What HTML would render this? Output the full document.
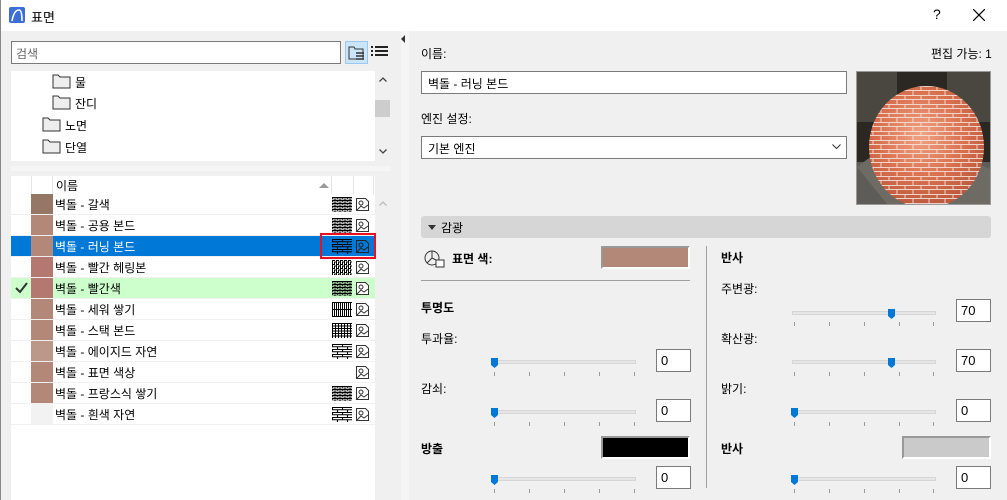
<!DOCTYPE html>
<html><head><meta charset="utf-8"><style>
*{box-sizing:border-box;margin:0;padding:0}
body{width:1007px;height:500px;overflow:hidden;background:#f0f0f0;font-family:"Liberation Sans","Noto Sans CJK KR",sans-serif;font-size:12px;color:#000;position:relative}
.a{position:absolute}
.inp{position:absolute;background:#fff;border:1px solid #7a7a7a}
.row{position:absolute;left:11px;width:364px;height:21px;border-bottom:1px solid #f0f0f0}
.row .sw{position:absolute;left:20px;top:0;width:22px;height:20px}
.row .nm{position:absolute;left:44px;top:2px}
.row .pt{position:absolute;left:321px;top:3px;width:20px;height:15px}
.row .ic{position:absolute;left:344px;top:3px;width:15px;height:15px}
.sl{position:absolute;height:4px;background:#e6e6e6;border:1px solid #d6d6d6}
.th{position:absolute;width:7px;height:10px;background:#0078d7;clip-path:polygon(0 0,100% 0,100% 70%,50% 100%,0 70%)}
.num{position:absolute;width:35px;height:23px;background:#fff;border:1px solid #7a7a7a;padding:3px 4px;font-size:13px}
.lbl{position:absolute;font-size:12px}
.b{font-weight:bold}
</style></head><body>
<svg width="0" height="0" style="position:absolute"><defs>
<symbol id="img" viewBox="0 0 15 15"><path d="M1.5 1.5h9l3 3v9h-12z" fill="#fff" stroke="#333"/><circle cx="6" cy="6" r="2" fill="none" stroke="#333"/><path d="M2 13l4-4 3 2 4-3" fill="none" stroke="#333"/></symbol>
<pattern id="p1" width="5" height="3" patternUnits="userSpaceOnUse"><path d="M0 0.5h5M0.5 0v1.5M3 1.5v1.5" stroke="#000"/><path d="M0 2h5" stroke="#000" stroke-width=".6"/></pattern>
<pattern id="p2" width="10" height="5" patternUnits="userSpaceOnUse"><path d="M0 0.5h10M0.5 0.5v2.5M5.5 2.5v2.5M0 2.75h10" stroke="#000" stroke-width="1.1"/></pattern>
<pattern id="p3" width="4" height="4" patternUnits="userSpaceOnUse"><path d="M0 0.5h3M0.5 0v4M2 2h2M2.5 2v2" stroke="#000"/></pattern>
<pattern id="p4" width="2" height="7" patternUnits="userSpaceOnUse"><path d="M0.5 0v7M0 0.5h2" stroke="#000"/></pattern>
<pattern id="p5" width="3" height="2.5" patternUnits="userSpaceOnUse"><path d="M0 0.5h3M0.5 0v3" stroke="#000"/></pattern>
</defs></svg>
<!-- title bar -->
<div class="a" style="left:0;top:0;width:1007px;height:31px;background:#fff"></div>
<div class="a" style="left:9px;top:7px;width:16px;height:16px;background:#3b6fd6;border-radius:2px"></div>
<svg class="a" style="left:9px;top:7px" width="16" height="16"><path d="M3 14 Q5 3 10 3 Q13 3 13 14" stroke="#fff" stroke-width="1.6" fill="none"/></svg>
<div class="a" style="left:31px;top:7px;font-size:13px">표면</div>
<div class="a" style="left:933px;top:6px;font-size:14px">?</div>
<svg class="a" style="left:973px;top:9px" width="12" height="12"><path d="M0 0L12 12M12 0L0 12" stroke="#000" stroke-width="1.2"/></svg>

<!-- left panel -->
<div class="inp" style="left:11px;top:41px;width:330px;height:23px;padding:3px 4px;color:#666">검색</div>
<div class="a" style="left:345px;top:41px;width:23px;height:23px;background:#cce4f7;border:1px solid #99c9ef"></div>
<svg class="a" style="left:348px;top:45px" width="18" height="16"><path d="M1 2h5l1 2h8v10H1z" fill="none" stroke="#333"/><path d="M8 8h8M8 11h8M8 14h8" stroke="#333" stroke-width="1.5"/></svg>
<svg class="a" style="left:371px;top:46px" width="17" height="12"><path d="M0 1h2M4 1h13M0 5h2M4 5h13M0 9h2M4 9h13" stroke="#222" stroke-width="2"/></svg>

<div class="a" style="left:11px;top:71px;width:364px;height:90px;background:#fff"></div>
<div class="a" style="left:375px;top:71px;width:16px;height:90px;background:#f0f0f0"></div>
<div class="a" style="left:375px;top:100px;width:15px;height:17px;background:#cdcdcd"></div>
<svg class="a" style="left:379px;top:77px" width="8" height="5"><path d="M0.5 4.5L4 1L7.5 4.5" stroke="#444" fill="none" stroke-width="1.3"/></svg>
<svg class="a" style="left:379px;top:149px" width="8" height="5"><path d="M0.5 0.5L4 4L7.5 0.5" stroke="#444" fill="none" stroke-width="1.3"/></svg>
<svg class="a" style="left:52px;top:73px" width="20" height="17"><path d="M1 2h5l2 2h10v11H1z" fill="#eee" stroke="#333"/></svg>
<div class="a" style="left:75px;top:74px">물</div>
<svg class="a" style="left:52px;top:94px" width="20" height="17"><path d="M1 2h5l2 2h10v11H1z" fill="#eee" stroke="#333"/></svg>
<div class="a" style="left:75px;top:95px">잔디</div>
<svg class="a" style="left:42px;top:116px" width="20" height="17"><path d="M1 2h5l2 2h10v11H1z" fill="#eee" stroke="#333"/></svg>
<div class="a" style="left:65px;top:117px">노면</div>
<svg class="a" style="left:42px;top:138px" width="20" height="17"><path d="M1 2h5l2 2h10v11H1z" fill="#eee" stroke="#333"/></svg>
<div class="a" style="left:65px;top:139px">단열</div>

<div class="a" style="left:11px;top:166px;width:380px;height:5px;background:#f5f5f5"></div>

<div class="a" style="left:11px;top:176px;width:364px;height:324px;background:#fff"></div>
<div class="a" style="left:375px;top:176px;width:16px;height:324px;background:#f0f0f0"></div>
<svg class="a" style="left:379px;top:201px" width="8" height="5"><path d="M0.5 4.5L4 1L7.5 4.5" stroke="#bbb" fill="none" stroke-width="1.3"/></svg>
<div class="a" style="left:31px;top:176px;width:1px;height:18px;background:#e5e5e5"></div>
<div class="a" style="left:52px;top:176px;width:1px;height:18px;background:#e5e5e5"></div>
<div class="a" style="left:331px;top:176px;width:1px;height:18px;background:#e5e5e5"></div>
<div class="a" style="left:353px;top:176px;width:1px;height:18px;background:#e5e5e5"></div>
<div class="a" style="left:373px;top:176px;width:1px;height:18px;background:#e5e5e5"></div>
<div class="a" style="left:56px;top:177px">이름</div>
<div class="a" style="left:319px;top:183px;width:0;height:0;border-left:5px solid transparent;border-right:5px solid transparent;border-bottom:5px solid #999"></div>

<div class="row" style="top:194px"><div class="sw" style="background:#967766"></div><div class="nm">벽돌 - 갈색</div><svg class="pt"><rect width="20" height="15" fill="url(#p1)"/></svg><svg class="ic"><use href="#img"/></svg></div>
<div class="row" style="top:215px"><div class="sw" style="background:#b48878"></div><div class="nm">벽돌 - 공용 본드</div><svg class="pt"><rect width="20" height="15" fill="url(#p1)"/></svg><svg class="ic"><use href="#img"/></svg></div>
<div class="row" style="top:236px;background:#0078d7;color:#fff"><div class="sw" style="background:#b48878"></div><div class="nm">벽돌 - 러닝 본드</div><svg class="pt"><rect width="20" height="15" fill="url(#p2)"/></svg><svg class="ic"><path d="M1.5 1.5h9l3 3v9h-12z" fill="#0078d7" stroke="#222"/><circle cx="6" cy="6" r="2" fill="none" stroke="#222"/><path d="M2 13l4-4 3 2 4-3" fill="none" stroke="#222"/></svg></div>
<div class="a" style="left:320px;top:233px;width:56px;height:26px;border:2px solid #e81123"></div>
<div class="row" style="top:257px"><div class="sw" style="background:#b47870"></div><div class="nm">벽돌 - 빨간 헤링본</div><svg class="pt"><rect width="20" height="15" fill="url(#p3)"/></svg><svg class="ic"><use href="#img"/></svg></div>
<div class="row" style="top:278px;background:#ccffcc"><svg class="a" style="left:4px;top:4px" width="13" height="12"><path d="M1 6l4 4 7-9" stroke="#333" stroke-width="2" fill="none"/></svg><div class="sw" style="background:#b47870"></div><div class="nm">벽돌 - 빨간색</div><svg class="pt"><rect width="20" height="15" fill="url(#p1)"/></svg><svg class="ic"><use href="#img"/></svg></div>
<div class="row" style="top:299px"><div class="sw" style="background:#b48878"></div><div class="nm">벽돌 - 세워 쌓기</div><svg class="pt"><rect width="20" height="15" fill="url(#p4)"/></svg><svg class="ic"><use href="#img"/></svg></div>
<div class="row" style="top:320px"><div class="sw" style="background:#b48878"></div><div class="nm">벽돌 - 스택 본드</div><svg class="pt"><rect width="20" height="15" fill="url(#p5)"/></svg><svg class="ic"><use href="#img"/></svg></div>
<div class="row" style="top:341px"><div class="sw" style="background:#bc9888"></div><div class="nm">벽돌 - 에이지드 자연</div><svg class="pt"><rect width="20" height="15" fill="url(#p2)"/></svg><svg class="ic"><use href="#img"/></svg></div>
<div class="row" style="top:362px"><div class="sw" style="background:#b48878"></div><div class="nm">벽돌 - 표면 색상</div><svg class="ic"><use href="#img"/></svg></div>
<div class="row" style="top:383px"><div class="sw" style="background:#b48878"></div><div class="nm">벽돌 - 프랑스식 쌓기</div><svg class="pt"><rect width="20" height="15" fill="url(#p1)"/></svg><svg class="ic"><use href="#img"/></svg></div>
<div class="row" style="top:404px"><div class="sw" style="background:#f2f2f2"></div><div class="nm">벽돌 - 흰색 자연</div><svg class="pt"><rect width="20" height="15" fill="url(#p2)"/></svg><svg class="ic"><use href="#img"/></svg></div>

<!-- splitter -->
<div class="a" style="left:401px;top:31px;width:8px;height:469px;background:#f5f5f5"></div>
<div class="a" style="left:401px;top:35px;width:0;height:0;border-top:4px solid transparent;border-bottom:4px solid transparent;border-right:4px solid #333"></div>

<!-- right panel -->
<div class="lbl" style="left:421px;top:45px">이름:</div>
<div class="lbl" style="left:931px;top:45px">편집 가능: 1</div>
<div class="inp" style="left:421px;top:71px;width:426px;height:23px;padding:3px 6px">벽돌 - 러닝 본드</div>
<div class="lbl" style="left:421px;top:110px">엔진 설정:</div>
<div class="inp" style="left:421px;top:136px;width:426px;height:23px;padding:3px 6px">기본 엔진</div>
<svg class="a" style="left:832px;top:144px" width="9" height="6"><path d="M0.5 0.5L4.5 4.5L8.5 0.5" stroke="#333" fill="none"/></svg>
<div class="a" style="left:856px;top:71px;width:135px;height:134px;border:1px solid #999;background:#3f3b36;overflow:hidden">
<svg class="a" style="left:0;top:0" width="133" height="132"><rect width="133" height="132" fill="#2b2824"/><path d="M0 0h40v50H0zM90 0h43v50H90z" fill="#4a4640"/><path d="M0 90h133v42H0z" fill="#5e5c58"/><path d="M0 95l30 37h30L20 80zM80 132l30-45 23 10v35z" fill="#6e6a64"/></svg>
<div class="a" style="left:12px;top:14px;width:115px;height:122px;border-radius:50%;background:radial-gradient(circle at 45% 40%,#f0a384,#d9704e 45%,#b5553a 80%,#8a3d28);"></div>
<svg class="a" style="left:12px;top:14px" width="115" height="122"><defs><clipPath id="c"><ellipse cx="57.5" cy="61" rx="57.5" ry="61"/></clipPath><pattern id="bk" width="16" height="9" patternUnits="userSpaceOnUse"><path d="M0 0.5h16M0 4.5h16M4 0.5v4M12 4.5v4.5" stroke="#f5e8e0" stroke-width="1" opacity=".85"/></pattern></defs><rect width="115" height="122" fill="url(#bk)" clip-path="url(#c)"/></svg>
</div>

<div class="a" style="left:421px;top:216px;width:570px;height:22px;background:#d6d6d6;border-radius:3px"></div>
<div class="a" style="left:428px;top:225px;border-left:4px solid transparent;border-right:4px solid transparent;border-top:5px solid #333"></div>
<div class="lbl" style="left:441px;top:219px">감광</div>

<svg class="a" style="left:424px;top:250px" width="22" height="18"><circle cx="8" cy="8" r="7" fill="none" stroke="#333"/><path d="M8 1v7l-5 5M8 8l6 3" stroke="#333" fill="none"/><rect x="12" y="10" width="8" height="7" fill="#fff" stroke="#333"/></svg>
<div class="lbl b" style="left:452px;top:250px">표면 색:</div>
<div class="a" style="left:601px;top:246px;width:89px;height:23px;background:#b48878;border:2px solid #999;border-right-color:#fff;border-bottom-color:#fff"></div>
<div class="a" style="left:421px;top:280px;width:269px;height:1px;background:#a0a0a0"></div>
<div class="a" style="left:706px;top:246px;width:1px;height:242px;background:#a0a0a0"></div>

<div class="lbl b" style="left:421px;top:299px">투명도</div>
<div class="lbl" style="left:421px;top:330px">투과율:</div>
<div class="lbl" style="left:421px;top:380px">감쇠:</div>
<div class="lbl b" style="left:421px;top:440px">방출</div>
<div class="a" style="left:601px;top:436px;width:89px;height:23px;background:#000;border:2px solid #999;border-right-color:#fff;border-bottom-color:#fff"></div>

<div class="lbl b" style="left:721px;top:249px">반사</div>
<div class="lbl" style="left:721px;top:280px">주변광:</div>
<div class="lbl" style="left:721px;top:330px">확산광:</div>
<div class="lbl" style="left:721px;top:380px">밝기:</div>
<div class="lbl b" style="left:721px;top:440px">반사</div>
<div class="a" style="left:902px;top:436px;width:89px;height:23px;background:#cacaca;border:2px solid #999;border-right-color:#fff;border-bottom-color:#fff"></div>

<div class="sl" style="left:494px;top:360px;width:142px"></div><div class="th" style="left:491px;top:358px"></div>
<div class="sl" style="left:494px;top:410px;width:142px"></div><div class="th" style="left:491px;top:408px"></div>
<div class="sl" style="left:494px;top:477px;width:142px"></div><div class="th" style="left:491px;top:475px"></div>
<div class="num" style="left:656px;top:349px">0</div>
<div class="num" style="left:656px;top:399px">0</div>
<div class="num" style="left:656px;top:466px">0</div>
<div class="sl" style="left:792px;top:311px;width:144px"></div><div class="th" style="left:888px;top:309px"></div>
<div class="sl" style="left:792px;top:360px;width:144px"></div><div class="th" style="left:888px;top:358px"></div>
<div class="sl" style="left:792px;top:410px;width:144px"></div><div class="th" style="left:791px;top:408px"></div>
<div class="sl" style="left:792px;top:477px;width:144px"></div><div class="th" style="left:791px;top:475px"></div>
<div class="num" style="left:956px;top:299px">70</div>
<div class="num" style="left:956px;top:349px">70</div>
<div class="num" style="left:956px;top:399px">0</div>
<div class="num" style="left:956px;top:466px">0</div>

<svg class="a" style="left:0;top:0;pointer-events:none" width="1007" height="500">
<g stroke="#999">
<path d="M494.5 372v4M529.5 372v4M564.5 372v4M599.5 372v4M634.5 372v4"/>
<path d="M494.5 422v4M529.5 422v4M564.5 422v4M599.5 422v4M634.5 422v4"/>
<path d="M494.5 489v4M529.5 489v4M564.5 489v4M599.5 489v4M634.5 489v4"/>
<path d="M794.5 322v4M829.5 322v4M864.5 322v4M899.5 322v4M933.5 322v4"/>
<path d="M794.5 372v4M829.5 372v4M864.5 372v4M899.5 372v4M933.5 372v4"/>
<path d="M794.5 422v4M829.5 422v4M864.5 422v4M899.5 422v4M933.5 422v4"/>
<path d="M794.5 489v4M829.5 489v4M864.5 489v4M899.5 489v4M933.5 489v4"/>
</g></svg>
<div class="a" style="left:0;top:0;width:1px;height:500px;background:#888"></div>
</body></html>
